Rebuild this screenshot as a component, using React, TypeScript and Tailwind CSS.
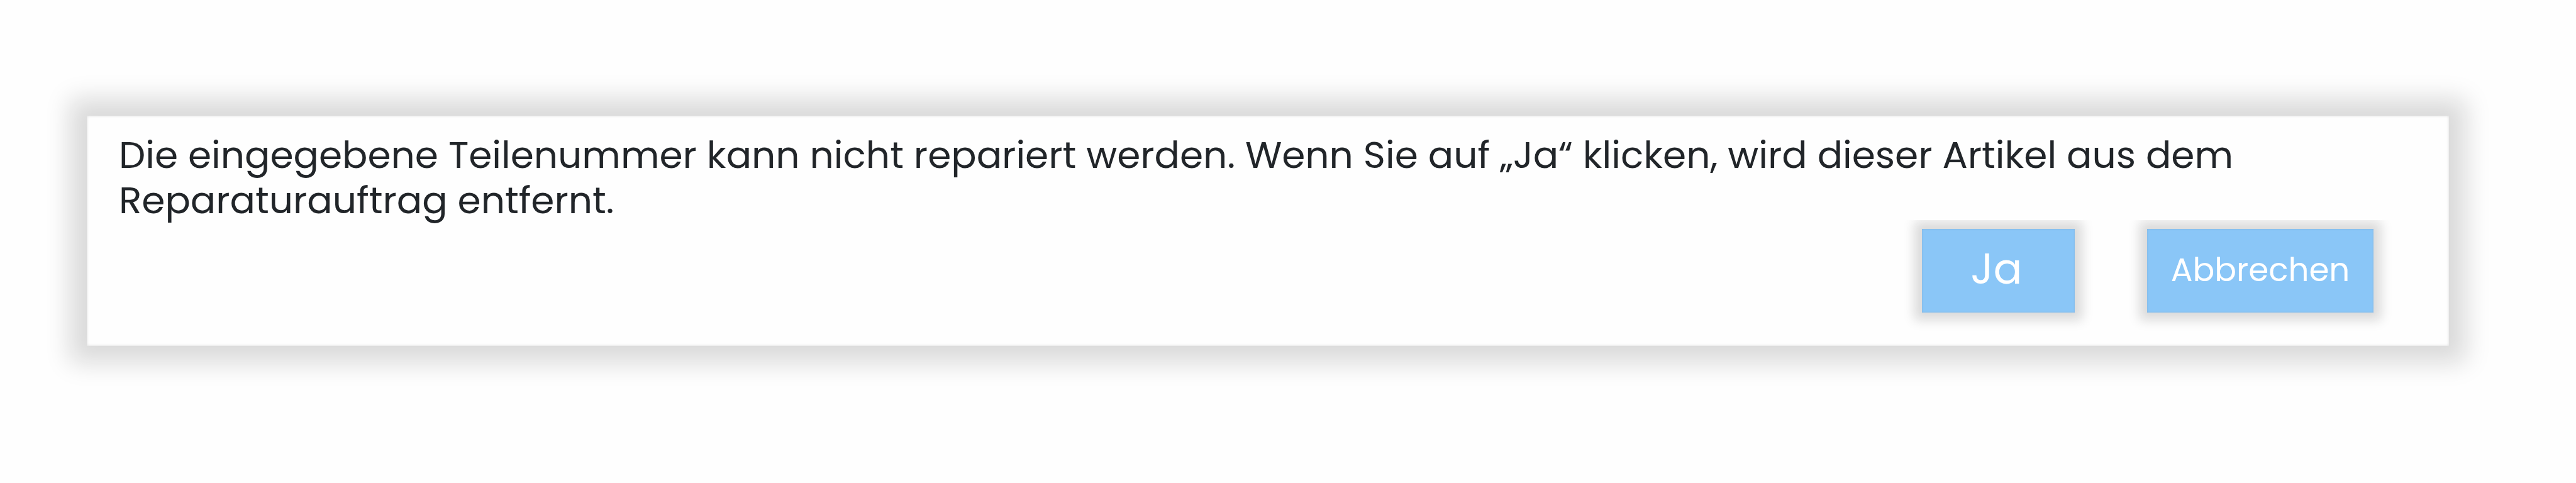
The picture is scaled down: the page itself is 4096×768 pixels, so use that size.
import type { ReactNode } from "react";

const MESSAGE =
  "Die eingegebene Teilenummer kann nicht repariert werden. Wenn Sie auf „Ja“ klicken, wird dieser Artikel aus dem Reparaturauftrag entfernt.";

function ActionButton({ className, children }: { className: string; children: ReactNode }) {
  return (
    <button
      type="button"
      className={`h-[133px] shrink-0 bg-[#8ac6f7] text-white whitespace-nowrap shadow-[0_0_17px_12px_#dadada,inset_0_0_3px_rgba(120,150,180,0.4)] ${className}`}
    >
      {children}
    </button>
  );
}

export default function App() {
  return (
    <main className="h-[768px] w-[4096px] overflow-hidden bg-[#fefefe] pt-[184px] pl-[138px] font-[Poppins,Inter,sans-serif]">
      <section className="flex h-[366px] w-[3756px] flex-col bg-[#fefefe] shadow-[0_0_37px_27px_#dadada,inset_0_0_4px_rgba(0,0,0,0.15)]">
        <div className="h-[166px] w-[3600px] pt-[26px] pl-[51px] text-[59.8px] leading-[72px] text-[#212529]">
          <p>{MESSAGE}</p>
        </div>

        {/* Actions */}
        <div className="flex h-[196px] justify-end gap-[115px] overflow-hidden pt-[14px] pr-[120px]">
          <ActionButton className="w-[243px] pr-[6px] pb-[6px] text-[68px]">Ja</ActionButton>
          <ActionButton className="w-[360px] pb-[2px] text-[51.5px]">Abbrechen</ActionButton>
        </div>
      </section>
    </main>
  );
}
